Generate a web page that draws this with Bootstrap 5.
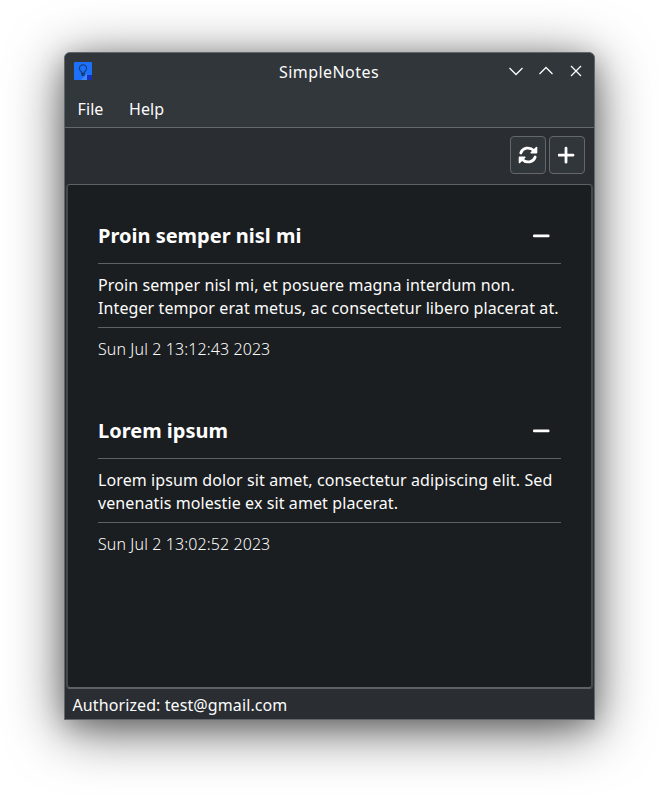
<!DOCTYPE html>
<html lang="en" data-bs-theme="dark">
<head>
<meta charset="utf-8">
<meta name="viewport" content="width=device-width, initial-scale=1">
<title>SimpleNotes</title>
<link href="https://cdn.jsdelivr.net/npm/bootstrap@5.3.0/dist/css/bootstrap.min.css" rel="stylesheet">
<style>
body{background:#fff;color:#fcfcfc;font:16px/23px "Noto Sans",sans-serif;letter-spacing:.1px;height:796px;overflow:hidden;padding:52px 64px 0}
.app-window{width:531px;height:668px;border:1px solid #5f676d;border-radius:6px 6px 0 0;background:#2a2e32;box-shadow:0 10px 55px rgba(0,0,0,.62),0 6px 24px rgba(0,0,0,.22)}
.app-head{height:75px;background:linear-gradient(#31363a,#32373c);border-bottom:1px solid #65696c;border-radius:5px 5px 0 0}
.title-bar{height:37px;padding:0 10px 0 9px}
.title-bar .caption{padding:1px 0 0 58px;letter-spacing:.45px}
.title-bar svg{position:relative;top:-1px}
.win-controls{gap:14px}
.menu-row{height:37px;padding:1px 12.5px 0;gap:25.500px}
.tool-row{height:56px;padding:0 9px 2px;gap:3px}
.tool-btn{width:36px;height:38px;background:#31363b;border:1px solid #65686b;border-radius:4px;color:#fff}
.notes-view{height:505px;margin:0 1px;border:1px solid #5d6163;border-width:1px 2px 2px;border-color:#5d6163 #45494b #5d6163 #45494b;border-radius:4px;background:#1b1e20;padding:29px 30px 0 30px}
.note{height:195px}
.note-head{height:50px;padding:0 11px 6px 0;border-bottom:1px solid #5f6264}
.note-title{font-size:20px;line-height:27px;font-weight:700;letter-spacing:0}
.note-head svg{position:relative;top:.5px;left:-.5px}
.note-text{height:64px;padding-top:10px;border-bottom:1px solid #5f6264;white-space:nowrap;margin-left:0;text-indent:0}
.note-date{padding-top:10px;font-weight:300}
.status-row{height:30px;padding:3px 7.500px 0}
</style>
</head>
<body>
<main class="app-window d-flex flex-column">
<header class="app-head">
<div class="title-bar d-flex align-items-center justify-content-between">
<svg width="18" height="18" viewBox="0 0 18 18"><path fill="#1d70fb" d="M1 0h16q1 0 1 1v12l-5 5H1q-1 0-1-1V1q0-1 1-1z"/><path fill="#4187fd" d="M13 12v6H7z"/><path fill="#1532bd" d="M13 13h5v4q0 1-1 1h-4z"/><path fill="none" stroke="#184078" stroke-width="1.2" d="M7.500 11.200V9.700C6.200 8.800 5.400 8 5.400 6.500a3.600 3.600 0 0 1 7.200 0c0 1.500-.8 2.300-2.100 3.200v1.500z"/><path fill="none" stroke="#183455" stroke-width="1.300" d="M7 11.800h4M7.700 13.400h2.600"/></svg>
<span class="caption">SimpleNotes</span>
<div class="win-controls d-flex">
<svg width="16" height="16" fill="none" stroke="#fcfcfc" stroke-width="1.3"><path d="M1.500 5 8 11.500 14.500 5"/></svg>
<svg width="16" height="16" fill="none" stroke="#fcfcfc" stroke-width="1.3"><path d="M1.500 11 8 4.500 14.500 11"/></svg>
<svg width="16" height="16" fill="none" stroke="#fcfcfc" stroke-width="1.3"><path d="m3 3 10 10M13 3 3 13"/></svg>
</div>
</div>
<nav class="menu-row d-flex align-items-center"><span>File</span><span>Help</span></nav>
</header>
<div class="tool-row d-flex align-items-center justify-content-end">
<button class="tool-btn p-0 d-flex align-items-center justify-content-center" type="button" aria-label="Refresh"><svg width="20" height="20" viewBox="0 0 20 20" fill="none" stroke="#fff" stroke-width="2.800" stroke-linecap="round" stroke-linejoin="round"><path d="M2.800 8C4.500 2.800 11.500 1.200 16 5.800M17.200 12C15.500 17.200 8.500 18.800 4 14.200"/><path stroke-width="1.600" fill="#fff" d="M18.500 2.500v5.300h-5.300zM1.500 17.500v-5.300h5.300z"/></svg></button>
<button class="tool-btn p-0 d-flex align-items-center justify-content-center" type="button" aria-label="Add"><svg width="18" height="18" fill="none" stroke="#fff" stroke-width="2.800" stroke-linecap="round"><path d="M8 2.200v14M1 9.200h14"/></svg></button>
</div>
<section class="notes-view">
<article class="note">
<div class="note-head d-flex align-items-center justify-content-between"><h2 class="note-title m-0">Proin semper nisl mi</h2><svg width="18" height="4"><rect x="1" y=".5" width="16.500" height="2.700" rx="1" fill="#fff"/></svg></div>
<div class="note-text">Proin semper nisl mi, et posuere magna interdum non.<br>Integer tempor erat metus, ac consectetur libero placerat at.</div>
<div class="note-date">Sun Jul 2 13:12:43 2023</div>
</article>
<article class="note">
<div class="note-head d-flex align-items-center justify-content-between"><h2 class="note-title m-0">Lorem ipsum</h2><svg width="18" height="4"><rect x="1" y=".5" width="16.500" height="2.700" rx="1" fill="#fff"/></svg></div>
<div class="note-text">Lorem ipsum dolor sit amet, consectetur adipiscing elit. Sed<br>venenatis molestie ex sit amet placerat.</div>
<div class="note-date">Sun Jul 2 13:02:52 2023</div>
</article>
</section>
<footer class="status-row d-flex align-items-center">Authorized: test@gmail.com</footer>
</main>
<script src="https://cdn.jsdelivr.net/npm/bootstrap@5.3.0/dist/js/bootstrap.bundle.min.js"></script>
</body>
</html>
